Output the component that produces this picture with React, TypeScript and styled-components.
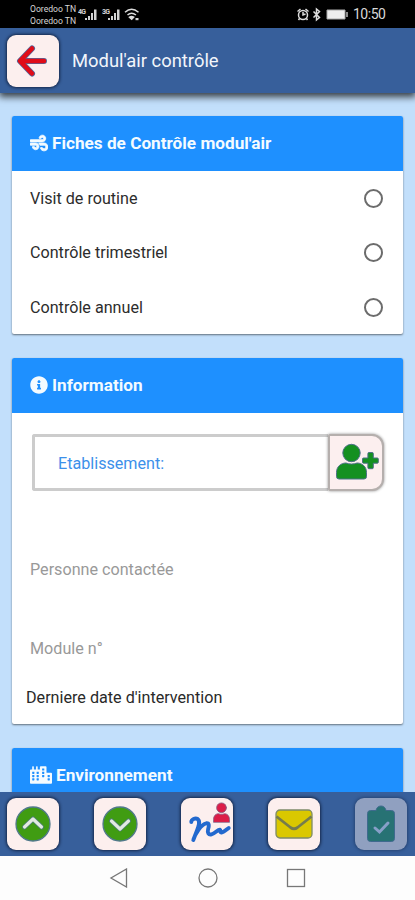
import React from "react";
import styled, { createGlobalStyle } from "styled-components";
import { FaWind, FaInfoCircle, FaCity } from "react-icons/fa";

const GlobalStyle = createGlobalStyle`
  * { box-sizing: border-box; }
  body { margin: 0; font-family: Roboto, "Noto Sans", sans-serif; overflow: hidden; }
`;

const Screen = styled.div`
  width: 415px;
  height: 900px;
  display: flex;
  flex-direction: column;
  overflow: hidden;
  background: #c2dffb;
`;

const StatusBar = styled.div`
  height: 28px;
  flex: none;
  display: flex;
  align-items: center;
  padding: 0 29px 0 30px;
  background: #000;
  color: #d8d8d8;
`;

const Carriers = styled.div`
  font-size: 8.6px;
  line-height: 12px;
  width: 47px;
  white-space: nowrap;
  letter-spacing: 0;
  padding-top: 2px;
`;

const Clock = styled.span`
  font-size: 14px;
  letter-spacing: -0.5px;
  margin-left: 4px;
  width: 33px;
  white-space: nowrap;
`;

const Spacer = styled.div`
  flex: 1;
`;

const AppBar = styled.header`
  height: 65px;
  flex: none;
  display: flex;
  align-items: center;
  padding: 0 7px;
  gap: 13px;
  background: #375f9b;
  box-shadow: 0 3px 7px 1px rgba(0, 0, 0, 0.72);
  z-index: 2;
`;

const Title = styled.h1`
  margin: 0;
  font-size: 18.4px;
  font-weight: 400;
  color: #f2f6fb;
  white-space: nowrap;
`;

const Tile = styled.button<{ $disabled?: boolean }>`
  width: 52px;
  height: 52px;
  flex: none;
  padding: 0;
  border: 0;
  border-radius: 9px;
  background: #fcefee;
  box-shadow: 0 0 3px 1px rgba(10, 20, 45, 0.75);
  opacity: ${(p) => (p.$disabled ? 0.45 : 1)};
  display: flex;
  align-items: center;
  justify-content: center;
`;

const Content = styled.main`
  flex: 1;
  min-height: 0;
  overflow: hidden;
  padding: 23px 12px 0;
  display: flex;
  flex-direction: column;
  gap: 24px;
`;

const Card = styled.section<{ $height: number }>`
  flex: none;
  height: ${(p) => p.$height}px;
  background: #fff;
  border-radius: 2px;
  overflow: hidden;
  box-shadow: 0 1px 2px rgba(0, 0, 0, 0.5);
`;

const CardHeader = styled.h2`
  margin: 0;
  height: 54.5px;
  padding: 0 18px;
  display: flex;
  align-items: center;
  gap: 4px;
  background: #1e90ff;
  color: #f4fbff;
  font-size: 17.2px;
  font-weight: 700;
  white-space: nowrap;
  svg { flex: none; }
`;

const BoldWind = styled(FaWind)`
  stroke: currentColor;
  stroke-width: 22px;
`;

const Option = styled.label`
  height: 54.3px;
  padding: 2px 20px 0 18px;
  display: flex;
  align-items: center;
  justify-content: space-between;
  font-size: 16.15px;
  color: #2c2c2c;
`;

const Radio = styled.span`
  width: 19px;
  height: 19px;
  border: 2px solid #6c6c6c;
  border-radius: 50%;
`;

const Picker = styled.div`
  display: flex;
  margin: 21px 19px 0 20px;
  height: 57px;
`;

const PickerField = styled.div`
  flex: 1;
  display: flex;
  align-items: center;
  padding: 3px 0 0 23px;
  border: 3px solid #ccc;
  border-right: 0;
  border-radius: 3px 0 0 3px;
  color: #3c90ea;
  font-size: 16.15px;
`;

const PickerButton = styled.button`
  width: 56px;
  padding: 0;
  border: 2px solid #b5afad;
  border-radius: 2px 12px 12px 2px;
  background: #fcefef;
  box-shadow: 0 0 3px rgba(0, 0, 0, 0.45);
  display: flex;
  align-items: center;
  justify-content: center;
`;

const Line = styled.div<{ $top: number; $left: number; $color: string }>`
  height: 20px;
  line-height: 20px;
  margin: ${(p) => p.$top}px 0 0 ${(p) => p.$left}px;
  color: ${(p) => p.$color};
  font-size: 16.15px;
  white-space: nowrap;
`;

const Toolbar = styled.nav`
  height: 63.5px;
  flex: none;
  display: flex;
  align-items: center;
  justify-content: space-between;
  padding: 1px 8px 0 7px;
  background: #375f9b;
`;

const SystemNav = styled.footer`
  height: 44.5px;
  flex: none;
  background: #fdfdfd;
  display: flex;
  align-items: center;
  justify-content: space-between;
  padding: 0 109px;
`;

const SignalIcons = () => (
  <svg width="64" height="28" viewBox="0 0 64 28" fill="#d2d2d2">
    <text x="1" y="14" fontSize="7" fontWeight="700" fontFamily="Roboto" letterSpacing="-0.7">4G</text>
    <path d="M8 20v-2h2v2zM11 20v-4h2v4zM14 20v-7h2v7zM17 20V9.500h2.500V20z" />
    <text x="25" y="14" fontSize="7" fontWeight="700" fontFamily="Roboto" letterSpacing="-0.7">3G</text>
    <path d="M31 20v-2h2v2zM34 20v-4h2v4zM37 20v-7h2v7zM40 20V9.500h2.500V20z" />
    <g fill="none" stroke="#dcdcdc" strokeWidth="1.500">
      <path d="M48 12.300q6.500-6 13.500 0M50.500 15q4-3.500 8.500 0" />
      <path d="M52.500 17.200q2-1.500 4.200 0l-2 2z" fill="#dcdcdc" />
    </g>
    <path d="M58.500 18h3v2.200h-3z" />
  </svg>
);

const DeviceIcons = () => (
  <svg width="53" height="28" viewBox="0 0 53 28" fill="none" stroke="#dedede" strokeWidth="1.500">
    <circle cx="7" cy="15" r="4.500" />
    <path d="M1.500 11.500l3-2.500M12.500 11.500l-3-2.500M7 12v3l2.500-1M3.500 18.500L2.500 20M10.500 18.500l1 1.500" />
    <path d="M17.500 11.500l6 6L20.500 20V9l3 2.500-6 6" />
    <path d="M31 10h18v9H31z" fill="#eee" stroke="#aaa" strokeWidth="1" />
    <path d="M51 12v5" stroke="#bbb" />
  </svg>
);

const BackArrow = () => (
  <svg width="40" height="40" viewBox="0 0 40 40" fill="none" strokeLinecap="round" strokeLinejoin="round">
    <path d="M19 7.500L7 20l12 12.500M8 20h23" stroke="#54689b" strokeWidth="6" />
    <path d="M19 7.500L7 20l12 12.500M8 20h23" stroke="#e00c18" strokeWidth="4.500" />
  </svg>
);

const PersonPlus = () => (
  <svg width="46" height="40" viewBox="0 0 46 40" fill="#149020" stroke="#4c7187" strokeWidth="1">
    <circle cx="18.500" cy="11" r="8.700" />
    <path d="M3.500 34.500v-4c0-6 4.500-9.500 9.500-9.500 3.400 1.400 7.600 1.400 11 0 5 0 9.500 3.500 9.500 9.500v4q0 2.500-2.500 2.500H6Q3.500 37 3.500 34.500z" />
    <path d="M35.900 10.500h3.400q1 0 1 1V16h4q1 0 1 1v3.200q0 1-1 1h-4v4.500q0 1-1 1h-3.400q-1 0-1-1v-4.500h-4.400q-1 0-1-1V17q0-1 1-1h4.400v-4.500q0-1 1-1z" />
  </svg>
);

const ChevronDisc = ({ down }: { down?: boolean }) => (
  <svg width="38" height="38" viewBox="0 0 38 38" fill="none">
    <circle cx="19" cy="19" r="17" fill="#409c12" stroke="#51798b" strokeWidth="1.300" />
    <path
      d={down ? "M10.500 16l8.500 8 8.500-8" : "M10.500 22l8.500-8 8.500 8"}
      stroke="#4c7f71" strokeWidth="5" strokeLinecap="round" strokeLinejoin="round"
    />
    <path
      d={down ? "M10.500 16l8.500 8 8.500-8" : "M10.500 22l8.500-8 8.500 8"}
      stroke="#e3e9e2" strokeWidth="3.200" strokeLinecap="round" strokeLinejoin="round"
    />
  </svg>
);

const Signature = () => (
  <svg width="52" height="52" viewBox="0 0 52 52" fill="none" strokeLinecap="round" strokeLinejoin="round">
    <g fill="#dc1d48" stroke="#866084" strokeWidth="0.800">
      <circle cx="40.500" cy="9.800" r="4.900" />
      <path d="M32.500 24v-2.500c0-3.700 2.300-5.800 5-5.800 2 .8 4 .8 6 0 2.700 0 5 2.100 5 5.800V24z" />
    </g>
    <path
      d="M10.300 24c0-2.700 4-4.500 6.300-3 3 2.300 1.200 7-.8 12L12.300 42c2.200-7 7.700-15.500 13-16.700 3.300-.3 2.700 3 1.800 6-.9 3.500.4 5.700 3.400 5 3.500-.8 6.500-5 8.300-4.600 1.500.5-.5 3 1.700 2.800 2.500-.3 5-2.800 7.200-4.500"
      stroke="#2369ce" strokeWidth="3.900"
    />
  </svg>
);

const Envelope = () => (
  <svg width="38" height="30" viewBox="0 0 38 30">
    <rect x="1" y="1" width="36" height="28" rx="4" fill="#dac800" stroke="#7d8b68" strokeWidth="1.300" />
    <path d="M1.500 7.500l14 11q3.500 2.500 7 0l14-11" fill="none" stroke="#757c4d" strokeWidth="2.800" />
  </svg>
);

const ClipboardCheck = () => (
  <svg width="30" height="38" viewBox="0 0 30 38">
    <path d="M4.500 5.500H10c.8-6 9.200-6 10 0h5.500q3 0 3 3v25q0 3-3 3h-21q-3 0-3-3v-25q0-3 3-3z" fill="#158b47" stroke="#4a7880" strokeWidth="1" />
    <path d="M9 23l4.500 4L22 18" fill="none" stroke="#e9eeff" strokeWidth="3" strokeLinecap="round" />
  </svg>
);

const options = ["Visit de routine", "Contrôle trimestriel", "Contrôle annuel"];

export default function App() {
  return (
    <Screen>
      <GlobalStyle />
      <StatusBar>
        <Carriers>Ooredoo TN<br />Ooredoo TN</Carriers>
        <SignalIcons />
        <Spacer />
        <DeviceIcons />
        <Clock>10:50</Clock>
      </StatusBar>
      <AppBar>
        <Tile aria-label="Retour"><BackArrow /></Tile>
        <Title>Modul'air contrôle</Title>
      </AppBar>
      <Content>
        <Card $height={218}>
          <CardHeader><BoldWind size={18} /><span>Fiches de Contrôle modul'air</span></CardHeader>
          {options.map((text) => (
            <Option key={text}><span>{text}</span><Radio /></Option>
          ))}
        </Card>
        <Card $height={366}>
          <CardHeader><FaInfoCircle size={18} /><span>Information</span></CardHeader>
          <Picker>
            <PickerField>Etablissement:</PickerField>
            <PickerButton aria-label="Ajouter"><PersonPlus /></PickerButton>
          </Picker>
          <Line $top={69} $left={18} $color="#999">Personne contactée</Line>
          <Line $top={59} $left={18} $color="#999">Module n°</Line>
          <Line $top={29} $left={14} $color="#292929">Derniere date d'intervention</Line>
        </Card>
        <Card $height={120}>
          <CardHeader><FaCity size={22} /><span>Environnement</span></CardHeader>
        </Card>
      </Content>
      <Toolbar>
        <Tile aria-label="Monter"><ChevronDisc /></Tile>
        <Tile aria-label="Descendre"><ChevronDisc down /></Tile>
        <Tile aria-label="Signature"><Signature /></Tile>
        <Tile aria-label="Message"><Envelope /></Tile>
        <Tile $disabled aria-label="Valider"><ClipboardCheck /></Tile>
      </Toolbar>
      <SystemNav>
        <svg width="20" height="20" viewBox="0 0 20 20" fill="none" stroke="#777" strokeWidth="1.300"><path d="M17.500 1v18L2 10z" /></svg>
        <svg width="20" height="20" viewBox="0 0 20 20" fill="none" stroke="#777" strokeWidth="1.300"><circle cx="10" cy="10" r="9" /></svg>
        <svg width="20" height="20" viewBox="0 0 20 20" fill="none" stroke="#777" strokeWidth="1.300"><rect x="1.500" y="1.500" width="17" height="17" /></svg>
      </SystemNav>
    </Screen>
  );
}
